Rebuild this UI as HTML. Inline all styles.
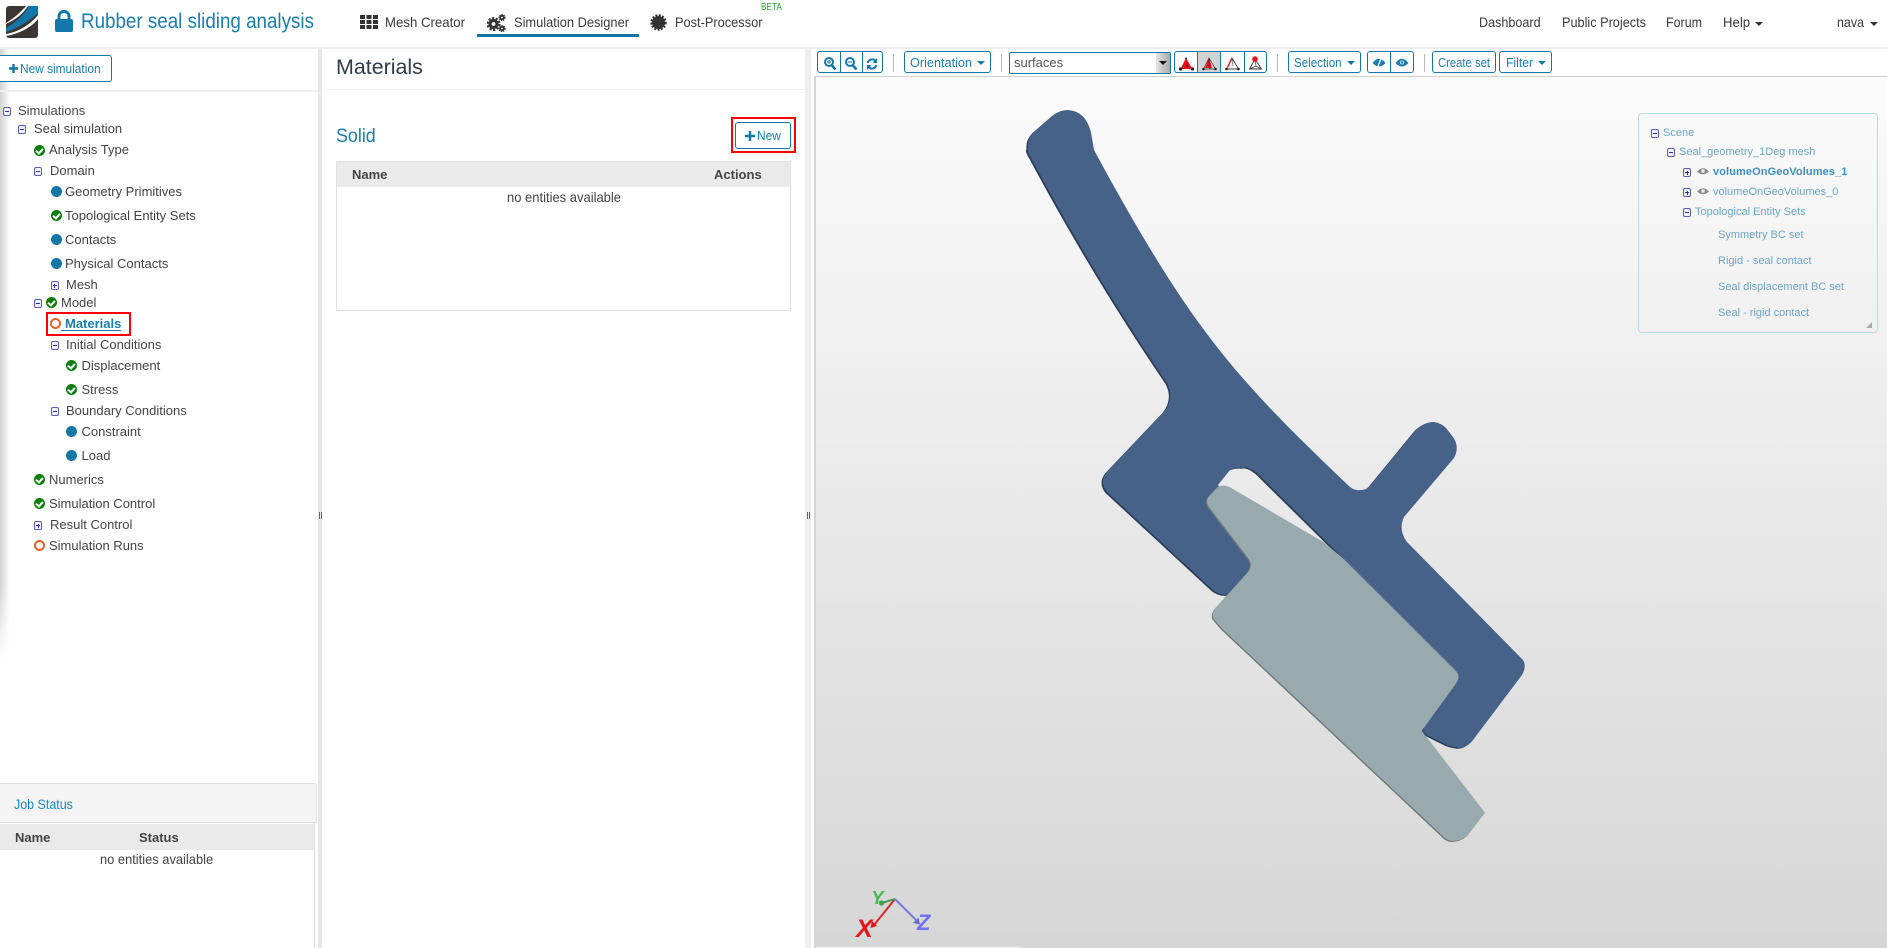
<!DOCTYPE html>
<html lang="en"><head><meta charset="utf-8"><title>Rubber seal sliding analysis</title>
<style>
html,body{margin:0;padding:0;background:#fff;width:1887px;height:948px;overflow:hidden;font-family:"Liberation Sans",sans-serif;color:#444}
*{box-sizing:border-box}
.t{position:absolute;white-space:nowrap;line-height:20px;font-size:13px;transform-origin:0 50%}
.n{font-size:14px;color:#3a3a3a}
.a{position:absolute}
.sv{position:absolute;left:0;top:0;overflow:visible}
.c{position:absolute;width:11px;height:11px;border-radius:50%;background:#1277a8}
.o{position:absolute;width:11px;height:11px;border-radius:50%;border:2px solid #e2642a;background:#fff}
.k{position:absolute;width:11px;height:11px;border-radius:50%;background:#0b7d0b}
.k:after{content:"";position:absolute;left:3px;top:2px;width:3px;height:5px;border:solid #fff;border-width:0 2px 2px 0;transform:rotate(42deg)}
.m,.p{position:absolute;width:8px;height:9px;border:1px solid #5a5fb5;border-radius:2px;background:#eef0fa}
.m:before,.p:before{content:"";position:absolute;left:1px;top:3px;width:4px;height:1px;background:#2a2fa5}
.p:after{content:"";position:absolute;left:2.5px;top:1.5px;width:1px;height:4px;background:#2a2fa5}
.b{position:absolute;top:51px;height:22px;border:1px solid #1277a8;border-radius:3px;background:#fff}
.bl{color:#1a7dae}
.d{position:absolute;top:52px;height:20px;width:1px;background:#1277a8}
.s{position:absolute;top:54px;height:18px;width:1px;background:#bdb6c0}
.cr{position:absolute;width:0;height:0;border-left:4px solid transparent;border-right:4px solid transparent;border-top:4px solid #1277a8}
.sc{font-size:11px;color:#6ea5c4}
</style></head><body>

<!-- navbar -->
<svg class="a" style="left:6px;top:6px" width="32" height="32" viewBox="0 0 32 32"><rect width="32" height="32" rx="3" fill="#3b3633"/><path d="M32 0H23C18 9 9 17 0 22V26C12 22 25 14 32 7Z" fill="#1277a8"/><path d="M32 9C24 19 12 26 0 28V30C12 28 25 22 32 13Z" fill="#fff"/><path d="M20 0C14 7 8 12 0 17V18C9 14 17 8 22 0Z" fill="#fff"/></svg>
<svg class="a" style="left:55px;top:10px" width="18" height="22" viewBox="0 0 18 22"><rect y="9" width="18" height="13" rx="2" fill="#1277a8"/><path d="M4 10V6.5C4 3.5 6 1.5 9 1.5S14 3.5 14 6.5V10" fill="none" stroke="#1277a8" stroke-width="3"/></svg>
<div class="t" style="left:81px;top:12px;font-size:21px;color:#1a7dae;transform:scaleX(.895)">Rubber seal sliding analysis</div>

<svg class="a" style="left:360px;top:15px" width="18" height="14" fill="#333"><rect width="5" height="4"/><rect x="6.5" width="5" height="4"/><rect x="13" width="5" height="4"/><rect y="5" width="5" height="4"/><rect x="6.5" y="5" width="5" height="4"/><rect x="13" y="5" width="5" height="4"/><rect y="10" width="5" height="4"/><rect x="6.5" y="10" width="5" height="4"/><rect x="13" y="10" width="5" height="4"/></svg>
<div class="t n" style="left:385px;top:12px;transform:scaleX(.943)">Mesh Creator</div>
<svg class="a" style="left:487px;top:14px" width="19" height="18" fill="none" stroke="#333"><circle cx="6.500" cy="10" r="3.500" stroke-width="3.200"/><circle cx="6.500" cy="10" r="6" stroke-width="2" stroke-dasharray="2.200 1.600"/><circle cx="15" cy="3.500" r="1.800" stroke-width="1.800"/><circle cx="15" cy="3.500" r="3" stroke-width="1.200" stroke-dasharray="1.300 .9"/><circle cx="15" cy="14.500" r="1.800" stroke-width="1.800"/><circle cx="15" cy="14.500" r="3" stroke-width="1.200" stroke-dasharray="1.300 .9"/></svg>
<div class="t n" style="left:514px;top:12px;transform:scaleX(.918)">Simulation Designer</div>
<div class="a" style="left:477px;top:34px;width:162px;height:3px;background:#1277a8"></div>
<svg class="a" style="left:650px;top:14px" width="17" height="17"><circle cx="8.500" cy="8.500" r="6.500" fill="#333"/><circle cx="8.500" cy="8.500" r="7.200" fill="none" stroke="#333" stroke-width="2" stroke-dasharray="2 1.400"/></svg>
<div class="t n" style="left:674.500px;top:12px;transform:scaleX(.914)">Post-Processor</div>
<div class="t" style="left:761px;top:-2px;font-size:10px;color:#2ea52e;transform:scaleX(.82)">BETA</div>

<div class="t n" style="left:1479px;top:12px;transform:scaleX(.9)">Dashboard</div>
<div class="t n" style="left:1562px;top:12px;transform:scaleX(.907)">Public Projects</div>
<div class="t n" style="left:1666px;top:12px;transform:scaleX(.89)">Forum</div>
<div class="t n" style="left:1723px;top:12px;transform:scaleX(.94)">Help</div>
<div class="cr" style="left:1755px;top:22px;border-top-color:#333"></div>
<div class="t n" style="left:1837px;top:12px;transform:scaleX(.89)">nava</div>
<div class="cr" style="left:1870px;top:22px;border-top-color:#333"></div>
<div class="a" style="left:0;top:47px;width:1887px;height:2px;background:#eeeeee"></div>

<!-- left panel -->
<div class="a" style="left:0;top:49px;width:10px;height:611px;background:linear-gradient(90deg,#d2d2d2,#fff);-webkit-mask-image:linear-gradient(180deg,#000 88%,transparent);mask-image:linear-gradient(180deg,#000 88%,transparent)"></div>
<div class="b" style="left:-2px;top:55px;width:114px;height:27px"></div>
<svg class="a" style="left:9px;top:64px" width="9" height="9"><path d="M0 4.500H9M4.500 0V9" stroke="#1277a8" stroke-width="2.400"/></svg>
<div class="t bl" style="left:20px;top:59px;transform:scaleX(.914)">New simulation</div>
<div class="a" style="left:0;top:90px;width:318px;height:2px;background:#eeeeee"></div>

<span class="m" style="left:3px;top:107px"></span><div class="t" style="left:18px;top:101px;color:#4a4a4a">Simulations</div>
<span class="m" style="left:18px;top:125px"></span><div class="t" style="left:34px;top:119px">Seal simulation</div>
<span class="k" style="left:34px;top:144.500px"></span><div class="t" style="left:49px;top:140px">Analysis Type</div>
<span class="m" style="left:34px;top:167px"></span><div class="t" style="left:50px;top:161px">Domain</div>
<span class="c" style="left:50.500px;top:186px"></span><div class="t" style="left:65px;top:182px">Geometry Primitives</div>
<span class="k" style="left:50.500px;top:210px"></span><div class="t" style="left:65px;top:206px">Topological Entity Sets</div>
<span class="c" style="left:50.500px;top:234px"></span><div class="t" style="left:65px;top:230px">Contacts</div>
<span class="c" style="left:50.500px;top:258px"></span><div class="t" style="left:65px;top:254px">Physical Contacts</div>
<span class="p" style="left:50.500px;top:281px"></span><div class="t" style="left:66px;top:275px">Mesh</div>
<span class="m" style="left:34px;top:299px"></span><span class="k" style="left:46px;top:297px"></span><div class="t" style="left:61px;top:293px">Model</div>
<div class="a" style="left:46px;top:312px;width:85px;height:24px;border:2px solid #f00"></div>
<span class="o" style="left:50px;top:318px"></span><div class="t bl" style="left:65px;top:314px;font-weight:bold">Materials</div>
<div class="a" style="left:61px;top:330px;width:60px;height:1px;background:#1277a8"></div>
<span class="m" style="left:50.500px;top:341px"></span><div class="t" style="left:66px;top:335px">Initial Conditions</div>
<span class="k" style="left:66px;top:360px"></span><div class="t" style="left:81.500px;top:356px">Displacement</div>
<span class="k" style="left:66px;top:384px"></span><div class="t" style="left:81.500px;top:380px">Stress</div>
<span class="m" style="left:50.500px;top:407px"></span><div class="t" style="left:66px;top:401px">Boundary Conditions</div>
<span class="c" style="left:66px;top:426px"></span><div class="t" style="left:81.500px;top:422px">Constraint</div>
<span class="c" style="left:66px;top:450px"></span><div class="t" style="left:81.500px;top:446px">Load</div>
<span class="k" style="left:34px;top:474px"></span><div class="t" style="left:49px;top:470px">Numerics</div>
<span class="k" style="left:34px;top:498px"></span><div class="t" style="left:49px;top:494px">Simulation Control</div>
<span class="p" style="left:34px;top:521px"></span><div class="t" style="left:50px;top:515px">Result Control</div>
<span class="o" style="left:34px;top:540px"></span><div class="t" style="left:49px;top:536px">Simulation Runs</div>

<!-- job status -->
<div class="a" style="left:0;top:783px;width:317px;height:40px;background:#f4f4f4;border-top:1px solid #ddd;border-bottom:1px solid #ddd;border-right:1px solid #e4e4e4;border-top-right-radius:3px"></div>
<div class="t" style="left:14px;top:794px;font-size:14px;color:#1a8bc0;transform:scaleX(.89)">Job Status</div>
<div class="a" style="left:0;top:824px;width:314px;height:26px;background:#eaeaea"></div>
<div class="a" style="left:314px;top:823px;width:1px;height:125px;background:#ddd"></div>
<div class="t" style="left:15px;top:828px;font-weight:bold">Name</div>
<div class="t" style="left:139px;top:828px;font-weight:bold">Status</div>
<div class="t" style="left:100px;top:849px;font-size:14px;transform:scaleX(.92)">no entities available</div>

<!-- splitters -->
<div class="a" style="left:318px;top:49px;width:4px;height:899px;background:#e7e7e7"></div>
<div class="a" style="left:319px;top:512px;width:3px;height:7px;border-left:1px solid #666;border-right:1px solid #666"></div>
<div class="a" style="left:805px;top:49px;width:6px;height:899px;background:#eeeeee"></div>
<div class="a" style="left:807px;top:512px;width:3px;height:7px;border-left:1px solid #666;border-right:1px solid #666"></div>

<!-- middle panel -->
<div class="t" style="left:336px;top:58px;font-size:21px;color:#2f3b46;transform:scaleX(1.02)">Materials</div>
<div class="a" style="left:326px;top:89px;width:479px;height:1px;background:#eee"></div>
<div class="t" style="left:336px;top:126.500px;font-size:19px;color:#1a7dae;transform:scaleX(.94)">Solid</div>
<div class="a" style="left:731px;top:117px;width:65px;height:36px;border:2px solid #f00"></div>
<div class="b" style="left:735px;top:122px;width:56px;height:27px"></div>
<svg class="a" style="left:745px;top:131px" width="10" height="10"><path d="M0 5H10M5 0V10" stroke="#1277a8" stroke-width="2.400"/></svg>
<div class="t bl" style="left:756.500px;top:126px;transform:scaleX(.92)">New</div>
<div class="a" style="left:336px;top:161px;width:455px;height:150px;border:1px solid #e0e0e0"></div>
<div class="a" style="left:337px;top:162px;width:453px;height:25px;background:#eaeaea"></div>
<div class="t" style="left:352px;top:165px;font-weight:bold">Name</div>
<div class="t" style="left:714px;top:165px;font-weight:bold">Actions</div>
<div class="t" style="left:507px;top:186.500px;font-size:14px;transform:scaleX(.927)">no entities available</div>

<!-- viewport -->
<div class="a" style="left:814px;top:76px;width:1073px;height:872px;background:linear-gradient(180deg,#fbfbfb,#d6d6d6);border-top:1px solid #cfcfcf;border-left:2px solid #d4d4d4"></div>
<div class="a" style="left:816px;top:946px;width:205px;height:2px;background:#e6e6e6"></div>
<svg class="sv" width="1887" height="948">
<g>
<path transform="translate(-1.500 1)" fill="#2b3d57" d="M1053.600 115Q1060 110 1068 110Q1082 111 1088 124Q1091 130 1092 138L1094 150C1190 327 1233 376 1350 487Q1355 491 1361 490Q1366 490 1370 486L1416 430Q1424 422 1434 422Q1441 423 1446 428L1453 437Q1460 447 1454 458L1404 517Q1398 530 1407 542L1523 660Q1527 666 1522 675L1473 740Q1467 748 1458 747.700Q1452 747 1447 745L1427 735L1423 731L1430 700L1400 640L1343 558L1257 473Q1248 466 1243 467.700Q1235 467 1230 470L1218 485L1240 510L1270 570L1232 594Q1222 597 1213 590L1107 492Q1099 482 1107 472L1164 412Q1175 398 1167 383Q1093 274 1031 158Q1026 150 1028 148Q1027 139 1034 132Z"/>
<path fill="#476289" d="M1053.600 115Q1060 110 1068 110Q1082 111 1088 124Q1091 130 1092 138L1094 150C1190 327 1233 376 1350 487Q1355 491 1361 490Q1366 490 1370 486L1416 430Q1424 422 1434 422Q1441 423 1446 428L1453 437Q1460 447 1454 458L1404 517Q1398 530 1407 542L1523 660Q1527 666 1522 675L1473 740Q1467 748 1458 747.700Q1452 747 1447 745L1427 735L1423 731L1430 700L1400 640L1343 558L1257 473Q1248 466 1243 467.700Q1235 467 1230 470L1218 485L1240 510L1270 570L1232 594Q1222 597 1213 590L1107 492Q1099 482 1107 472L1164 412Q1175 398 1167 383Q1093 274 1031 158Q1026 150 1028 148Q1027 139 1034 132Z"/>
<path transform="translate(-1 1)" fill="#6c7a7b" d="M1218 486.700Q1223 484 1230 487.300L1323 541.700L1343 558.300L1456.700 671.700Q1461 677 1455 685L1421.700 730.700L1485 812.700L1468 835Q1460 842 1450 840.700Q1445 839 1441.700 835L1221.700 628.300L1213.300 618.300Q1211 612 1218.300 605L1248.300 571.700Q1253 565 1248.300 558.300L1210 508.300Q1204 501 1210 495Z"/>
<path fill="#98aaae" d="M1218 486.700Q1223 484 1230 487.300L1323 541.700L1343 558.300L1456.700 671.700Q1461 677 1455 685L1421.700 730.700L1485 812.700L1468 835Q1460 842 1450 840.700Q1445 839 1441.700 835L1221.700 628.300L1213.300 618.300Q1211 612 1218.300 605L1248.300 571.700Q1253 565 1248.300 558.300L1210 508.300Q1204 501 1210 495Z"/>
</g>
<path d="M895 899L874 925" stroke="#d8272d" stroke-width="2"/><path d="M870.500 928L872 921L877 926Z" fill="#e0141c"/>
<path d="M895 899L882 903" stroke="#4d9a57" stroke-width="2"/><circle cx="881.500" cy="903" r="2.600" fill="#46a050"/>
<path d="M895 899L917 921" stroke="#7c7ce0" stroke-width="2"/><path d="M920 924.500L913 923L918.500 917.500Z" fill="#6a6ad0"/>
<text x="856" y="937" font-family="Liberation Sans" font-size="25" font-weight="bold" font-style="italic" fill="#e8141c">X</text>
<text x="871.500" y="904" font-family="Liberation Sans" font-size="18" font-weight="bold" font-style="italic" fill="#45b84c">Y</text>
<text x="917" y="930" font-family="Liberation Sans" font-size="22" font-weight="bold" font-style="italic" fill="#7272f0">Z</text>
</svg>

<!-- toolbar -->
<div class="b" style="left:817px;width:66px"></div><div class="d" style="left:840px"></div><div class="d" style="left:862px"></div>
<svg class="sv" width="1887" height="100" fill="none" stroke="#1277a8">
<circle cx="829" cy="62" r="4" stroke-width="2"/><path d="M832 65.500L835.500 69.500" stroke-width="2.600"/><path d="M827 62H831M829 60V64" stroke-width="1"/>
<circle cx="850" cy="62" r="4" stroke-width="2"/><path d="M853 65.500L856.500 69.500" stroke-width="2.600"/><path d="M848 62H852" stroke-width="1"/>
<path d="M867.700 63A4.500 4.500 0 0 1 875.500 61M876.300 65A4.500 4.500 0 0 1 868.500 67" stroke-width="2"/><path d="M877 58V63H872.500ZM867 70V65H871.500Z" fill="#1277a8" stroke="none"/>
</svg>
<div class="s" style="left:893px"></div>
<div class="b" style="left:904px;width:87px"></div><div class="t bl" style="left:910px;top:53px;transform:scaleX(.975)">Orientation</div><div class="cr" style="left:977px;top:61px"></div>
<div class="s" style="left:1001px"></div>
<div class="a" style="left:1009px;top:52px;width:162px;height:22px;border:1px solid #1277a8;border-radius:2px;background:#fff"></div>
<div class="a" style="left:1156px;top:53px;width:14px;height:20px;background:linear-gradient(90deg,#e4e4e4,#aaa)"></div>
<div class="cr" style="left:1159px;top:61px;border-top-color:#111"></div>
<div class="t" style="left:1014px;top:53px;color:#555">surfaces</div>

<div class="b" style="left:1174px;width:93px"></div>
<div class="a" style="left:1198px;top:52px;width:22px;height:20px;background:#d2d2d2"></div>
<div class="d" style="left:1197px"></div><div class="d" style="left:1220px"></div><div class="d" style="left:1244px"></div>
<svg class="sv" width="1887" height="100">
<path d="M1186 58L1180.500 69H1192.500Z" fill="#e8101c"/><circle cx="1186" cy="58.500" r="1" fill="#222"/><circle cx="1180.500" cy="69" r="1.600" fill="#222"/><circle cx="1192.500" cy="69" r="1.600" fill="#222"/><circle cx="1187" cy="66" r=".9" fill="#222"/>
<path d="M1209 58L1203.500 69H1215.500Z" fill="#d2d2d2" stroke="#333" stroke-width=".7"/><path d="M1209 58L1205 68H1212Z" fill="#e8101c"/><path d="M1209 58L1210 69" stroke="#222" stroke-width=".8"/><circle cx="1203.500" cy="69" r="1.300" fill="#222"/><circle cx="1215.500" cy="69" r="1.300" fill="#222"/>
<path d="M1232 58L1226.500 69H1238.500Z" fill="#fff" stroke="#333" stroke-width=".9"/><path d="M1232 58L1227.500 67.500" stroke="#e8101c" stroke-width="1.400"/><path d="M1232 58L1233 66" stroke="#555" stroke-width=".6"/><circle cx="1226.500" cy="69" r="1.300" fill="#222"/><circle cx="1238.500" cy="69" r="1.300" fill="#222"/>
<path d="M1255 59L1249.500 69H1261.500Z" fill="#fff" stroke="#333" stroke-width=".9"/><path d="M1255 59L1256 66M1249.500 69L1256 66L1261.500 69" fill="none" stroke="#333" stroke-width=".7"/><circle cx="1255" cy="59" r="2.800" fill="#e8101c"/>
</svg>
<div class="s" style="left:1277px"></div>
<div class="b" style="left:1288px;width:73px"></div><div class="t bl" style="left:1294px;top:53px;transform:scaleX(.89)">Selection</div><div class="cr" style="left:1347px;top:61px"></div>
<div class="b" style="left:1367px;width:47px"></div><div class="d" style="left:1390px"></div>
<svg class="sv" width="1887" height="100">
<path d="M1372.500 63Q1379 54.500 1385.500 63Q1379 70 1372.500 63Z" fill="#1a7dae"/><path d="M1377 69L1382 56" stroke="#fff" stroke-width="1.300"/>
<path d="M1395.500 63Q1402 54.500 1408.500 63Q1402 70 1395.500 63Z" fill="#1a7dae"/><circle cx="1402" cy="62.500" r="2" fill="#cfe3ee"/><circle cx="1402" cy="62.500" r="1.100" fill="#1277a8"/>
</svg>
<div class="s" style="left:1424px"></div>
<div class="b" style="left:1432px;width:64px"></div><div class="t bl" style="left:1438px;top:53px;transform:scaleX(.867)">Create set</div>
<div class="b" style="left:1499px;width:53px"></div><div class="t bl" style="left:1506px;top:53px;transform:scaleX(.935)">Filter</div><div class="cr" style="left:1538px;top:61px"></div>

<!-- scene tree -->
<div class="a" style="left:1638px;top:113px;width:240px;height:220px;border:1px solid #b9dbe6;border-radius:4px"></div>
<span class="m" style="left:1651px;top:129px"></span><div class="t sc" style="left:1663px;top:123px">Scene</div>
<span class="m" style="left:1667px;top:148px"></span><div class="t sc" style="left:1679px;top:142px">Seal_geometry_1Deg mesh</div>
<span class="p" style="left:1683px;top:168px"></span>
<svg class="sv" width="1887" height="300"><path d="M1697 171.500Q1703 165 1709 171.500Q1703 177 1697 171.500Z" fill="#8a8a8a"/><circle cx="1703" cy="171" r="1.800" fill="#e8e8e8"/><path d="M1697 191.500Q1703 185 1709 191.500Q1703 197 1697 191.500Z" fill="#8a8a8a"/><circle cx="1703" cy="191" r="1.800" fill="#e8e8e8"/><path d="M1866 328H1872V322Z" fill="#aaa"/></svg>
<div class="t sc" style="left:1713px;top:162px;font-weight:bold;color:#3f8fc0;letter-spacing:.1px">volumeOnGeoVolumes_1</div>
<span class="p" style="left:1683px;top:188px"></span><div class="t sc" style="left:1713px;top:182px">volumeOnGeoVolumes_0</div>
<span class="m" style="left:1683px;top:208px"></span><div class="t sc" style="left:1695px;top:202px">Topological Entity Sets</div>
<div class="t sc" style="left:1718px;top:225px">Symmetry BC set</div>
<div class="t sc" style="left:1718px;top:251px">Rigid - seal contact</div>
<div class="t sc" style="left:1718px;top:277px">Seal displacement BC set</div>
<div class="t sc" style="left:1718px;top:303px">Seal - rigid contact</div>

</body></html>
